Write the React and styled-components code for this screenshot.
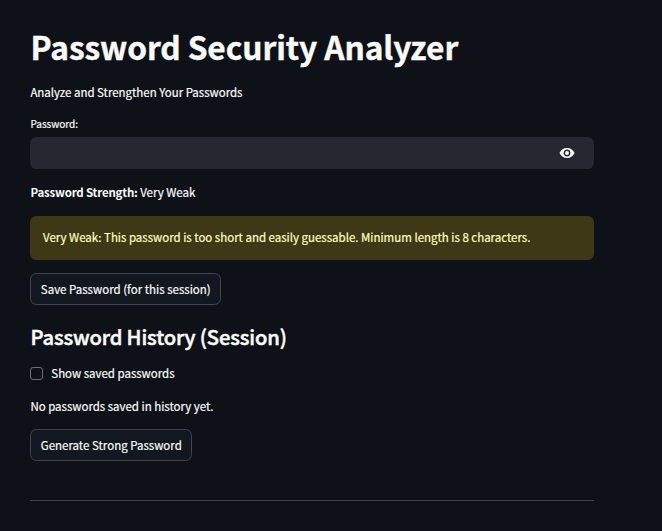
import React from "react";
import styled, { createGlobalStyle } from "styled-components";

const GlobalStyle = createGlobalStyle`
  * { box-sizing: border-box; }
  body {
    margin: 0;
    background: #0e1117;
    color: #fafafa;
    font-family: "Noto Sans CJK SC", "Noto Sans", sans-serif;
    font-size: 11.5px;
    line-height: 20px;
    -webkit-text-stroke: 0.2px currentColor;
  }
`;

const Page = styled.main`
  display: flex;
  flex-direction: column;
  align-items: flex-start;
  width: 662px;
  height: 531px;
  padding: 25px 68px 0 30px;
  overflow: hidden;
  white-space: nowrap;
`;

const Title = styled.h1`
  margin: 0;
  padding-left: 0.5px;
  font-size: 31.7px;
  font-weight: 700;
  letter-spacing: -0.08px;
  line-height: 42px;
  -webkit-text-stroke: 0.4px currentColor;
`;

const Text = styled.p`
  margin: ${({ $top }) => $top}px 0 0;
  padding-left: 0.4px;
  letter-spacing: -0.02px;
`;

const Strong = styled.strong`
  font-weight: 700;
  letter-spacing: -0.19px;
  -webkit-text-stroke: 0;
`;

const Label = styled.label`
  margin-top: 14px;
  padding-left: 0.4px;
  font-size: 10.1px;
  letter-spacing: -0.04px;
  line-height: 16px;
`;

const Field = styled.div`
  display: flex;
  align-items: center;
  width: 100%;
  height: 32px;
  margin-top: 5px;
  padding-right: 19px;
  border-radius: 6.4px;
  background: #262730;
`;

const Input = styled.input`
  flex: 1;
  min-width: 0;
  height: 100%;
  padding: 0 10px;
  border: 0;
  outline: 0;
  background: transparent;
  color: inherit;
  font: inherit;
`;

const EyeButton = styled.button`
  display: flex;
  padding: 0;
  border: 0;
  background: transparent;
  color: #fafafa;
`;

const Alert = styled.div`
  width: 100%;
  height: 44px;
  margin-top: 14px;
  padding: 11px 13px;
  border-radius: 6.4px;
  background: #3e3816;
  color: #ffffc2;
  letter-spacing: -0.015px;
`;

const Button = styled.button`
  width: ${({ $width }) => $width}px;
  height: 32px;
  margin-top: 13px;
  padding: 0 0 0 0.5px;
  border: 1px solid #41444c;
  border-radius: 6.4px;
  background: #131720;
  color: #fafafa;
  font: inherit;
`;

const Heading = styled.h3`
  margin: 18px 0 0;
  padding-left: 0.4px;
  font-size: 20.2px;
  font-weight: 500;
  letter-spacing: -0.14px;
  line-height: 28px;
  -webkit-text-stroke: 0.5px currentColor;
`;

const CheckRow = styled.label`
  display: flex;
  align-items: center;
  gap: 8.3px;
  margin-top: 12px;
  letter-spacing: -0.02px;
`;

const Checkbox = styled.input`
  appearance: none;
  width: 13px;
  height: 13px;
  margin: 0;
  border: 1px solid #6c6e74;
  border-radius: 3px;
`;

const Divider = styled.hr`
  width: 100%;
  height: 1px;
  margin: 39px 0 0;
  border: 0;
  background: #3b3e44;
`;

const EyeIcon = () => (
  <svg width="16" height="12" viewBox="0 0 16 12" fill="none">
    <path d="M8 1C4.4 1 1.7 3.1.5 6c1.2 2.9 3.9 5 7.5 5s6.3-2.1 7.5-5C14.3 3.1 11.6 1 8 1Z" fill="currentColor" />
    <circle cx="8" cy="6" r="2.7" stroke="#262730" strokeWidth="1.4" />
  </svg>
);

export default function App() {
  return (
    <>
      <GlobalStyle />
      <Page>
        <Title>Password Security Analyzer</Title>
        <Text $top={15}>Analyze and Strengthen Your Passwords</Text>
        <Label htmlFor="password">Password:</Label>
        <Field>
          <Input id="password" type="password" />
          <EyeButton type="button" aria-label="Show password"><EyeIcon /></EyeButton>
        </Field>
        <Text $top={13}><Strong>Password Strength:</Strong> Very Weak</Text>
        <Alert>Very Weak: This password is too short and easily guessable. Minimum length is 8 characters.</Alert>
        <Button $width={191}>Save Password (for this session)</Button>
        <Heading>Password History (Session)</Heading>
        <CheckRow><Checkbox type="checkbox" />Show saved passwords</CheckRow>
        <Text $top={13}>No passwords saved in history yet.</Text>
        <Button $width={162}>Generate Strong Password</Button>
        <Divider />
      </Page>
    </>
  );
}
